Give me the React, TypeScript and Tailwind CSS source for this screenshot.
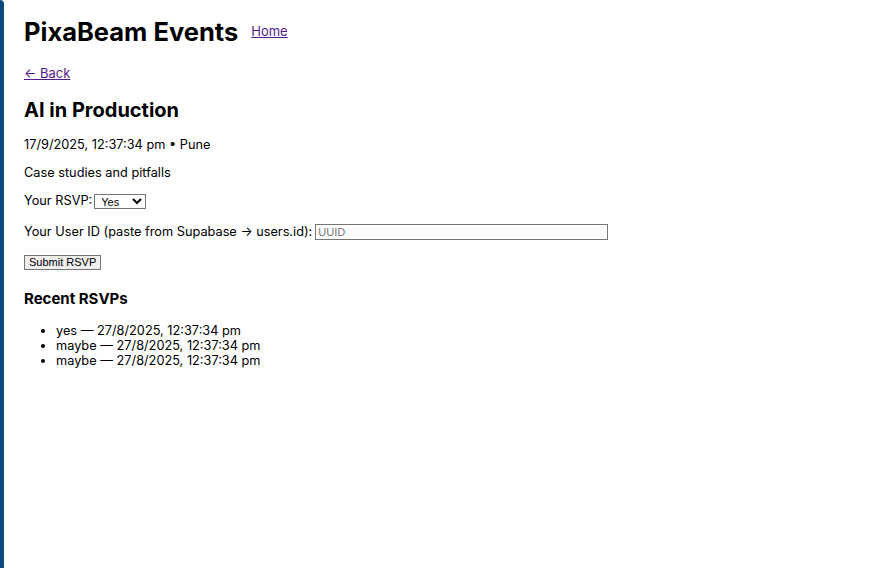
export default function App() {
  const rsvps = [
    { status: "yes", at: "27/8/2025, 12:37:34 pm" },
    { status: "maybe", at: "27/8/2025, 12:37:34 pm" },
    { status: "maybe", at: "27/8/2025, 12:37:34 pm" },
  ];

  return (
    <div className="flex min-h-screen bg-white font-['Inter',sans-serif] text-black">
      {/* window edge */}
      <div className="w-[4px] shrink-0 rounded-tr-[4px] bg-[#0b4a7e]" />

      <main className="flex-1 pl-[20px] pt-[17px]">
        <header className="flex items-center gap-[13px]">
          <h1 className="text-[25.5px] font-bold leading-[30px]">PixaBeam Events</h1>
          <a href="#" className="text-[13px] text-[#551a8b] underline">
            Home
          </a>
        </header>

        <div className="mt-[13px]">
          <a href="#" className="text-[13px] text-[#551a8b] underline">
            ← Back
          </a>
        </div>

        <h2 className="mt-[14px] text-[20px] font-bold leading-[24px]">AI in Production</h2>

        <p className="mt-[15px] text-[12.75px] leading-[16px]">17/9/2025, 12:37:34 pm • Pune</p>
        <p className="mt-[12px] text-[12.75px] leading-[16px]">Case studies and pitfalls</p>

        <div className="mt-[12px] flex items-center gap-[2px] text-[12.75px] leading-[16px]">
          <span>Your RSVP:</span>
          <select className="h-[15px] w-[52px] border border-[#767676] bg-white pl-[2px] font-['Liberation_Sans',sans-serif] text-[11px] leading-[13px]">
            <option>Yes</option>
            <option>No</option>
            <option>Maybe</option>
          </select>
        </div>

        <div className="mt-[15px] flex items-center gap-[3px] text-[12.75px] leading-[16px]">
          <span>Your User ID (paste from Supabase → users.id):</span>
          <input
            placeholder="UUID"
            className="h-[16px] w-[293px] border border-[#767676] px-[2px] font-['Liberation_Sans',sans-serif] text-[11px] placeholder:text-[#757575]"
          />
        </div>

        <button className="mt-[15px] h-[15px] border border-[#767676] bg-[#efefef] px-[4px] font-['Liberation_Sans',sans-serif] text-[11px] leading-[13px]">
          Submit RSVP
        </button>

        <h3 className="mt-[18px] text-[15px] font-bold leading-[18px]">Recent RSVPs</h3>

        <ul className="mt-[15px] list-disc pl-[32px] text-[12.75px] leading-[15px]">
          {rsvps.map((r, i) => (
            <li key={i}>
              {r.status} — {r.at}
            </li>
          ))}
        </ul>
      </main>
    </div>
  );
}
